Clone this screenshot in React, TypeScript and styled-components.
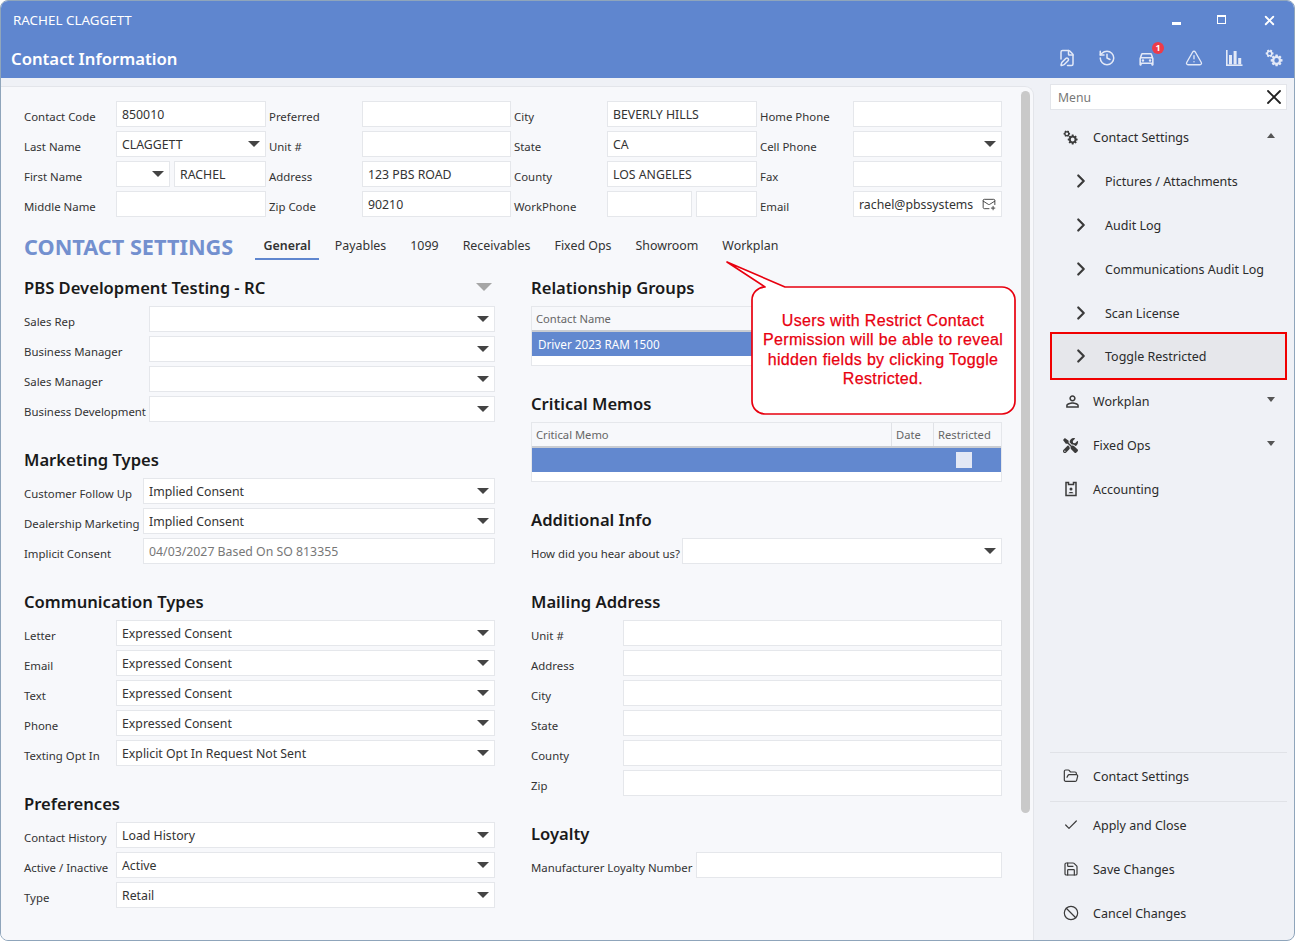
import styled, { createGlobalStyle } from 'styled-components';
import { Ban, Check, ChevronRight, FilePen, FolderOpen, History, MailPlus, Save, TriangleAlert, X } from 'lucide-react';
import { FaTools } from 'react-icons/fa';
import { MdOutlineDirectionsCar, MdPersonOutline } from 'react-icons/md';

const GlobalStyle = createGlobalStyle`
  * { box-sizing: border-box; }
  html, body { margin: 0; padding: 0; background: #fff; }
  body { font-family: "Noto Sans", "Open Sans", sans-serif; color: #333; }
`;

function gearPath(cx: number, cy: number, r: number, teeth: number) {
  const parts: string[] = [];
  const step = (Math.PI * 2) / teeth;
  for (let i = 0; i < teeth; i++) {
    const a = i * step;
    const pts = [
      [a - step * 0.42, r * 0.74],
      [a - step * 0.22, r],
      [a + step * 0.22, r],
      [a + step * 0.42, r * 0.74],
    ];
    pts.forEach(([ang, rad], j) => {
      const x = (cx + Math.cos(ang) * rad).toFixed(2);
      const y = (cy + Math.sin(ang) * rad).toFixed(2);
      parts.push(`${i === 0 && j === 0 ? 'M' : 'L'}${x} ${y}`);
    });
  }
  const hole = r * 0.38;
  parts.push(`Z M${cx + hole} ${cy} a${hole} ${hole} 0 1 0 ${-hole * 2} 0 a${hole} ${hole} 0 1 0 ${hole * 2} 0 Z`);
  return parts.join(' ');
}

function CogsIcon({ size = 18 }: { size?: number }) {
  return (
    <svg width={size} height={size} viewBox="0 0 18 18" fill="currentColor" fillRule="evenodd">
      <path d={gearPath(4.6, 4.4, 4, 6)} />
      <path d={gearPath(11.6, 11.4, 6, 8)} />
    </svg>
  );
}

function BarsIcon() {
  return (
    <svg width="18" height="18" viewBox="0 0 18 18" fill="currentColor">
      <rect x="1" y="1" width="1.6" height="16" />
      <rect x="1" y="15.4" width="16.5" height="1.6" />
      <rect x="4" y="6" width="3" height="9.4" />
      <rect x="8.6" y="2" width="3" height="13.4" />
      <rect x="13.2" y="9" width="3" height="6.4" />
    </svg>
  );
}

function AccountIcon() {
  return (
    <svg width="16" height="16" viewBox="0 0 16 16" fill="none" stroke="currentColor" strokeWidth="1.5">
      <path d="M3 1.5h2.5v2h5v-2H13v13H3z" />
      <circle cx="8" cy="8" r="1.5" fill="currentColor" stroke="none" />
      <path d="M5.5 12.2c.3-1.6 4.7-1.6 5 0z" fill="currentColor" stroke="none" />
    </svg>
  );
}

const Window = styled.div`
  width: 1295px;
  height: 941px;
  border: 1px solid #8fa5bb;
  border-radius: 8px;
  overflow: hidden;
  display: flex;
  flex-direction: column;
  background: #eff1f6;
`;

const TitleBar = styled.header`
  height: 77px;
  flex: none;
  background: #5f86cf;
  color: #fff;
  display: flex;
  flex-direction: column;
`;

const TitleRow = styled.div`
  height: 38px;
  padding: 0 17px 0 12px;
  display: flex;
  align-items: center;
  justify-content: space-between;
  font-size: 13.4px;
`;

const WindowButtons = styled.div`
  display: flex;
  align-items: center;
  gap: 36px;
`;

const MinButton = styled.span`
  width: 9px;
  height: 3px;
  margin-top: 7px;
  background: #fff;
`;

const MaxButton = styled.span`
  width: 9px;
  height: 9px;
  border: 1px solid #fff;
  border-top-width: 2px;
  margin-top: -2px;
`;

const HeaderRow = styled.div`
  height: 39px;
  padding: 0 11px 1px 10px;
  display: flex;
  align-items: center;
  justify-content: space-between;
`;

const PageTitle = styled.h1`
  margin: 0;
  font-size: 16.7px;
  font-weight: 600;
`;

const HeaderIcons = styled.div`
  display: flex;
  align-items: center;
  gap: 21px;
  color: #e3e9f7;
`;

const IconSlot = styled.span<{ $spaced?: boolean }>`
  position: relative;
  width: 19px;
  height: 19px;
  ${({ $spaced }) => ($spaced ? 'margin-left: 7px;' : '')}
  display: flex;
  align-items: center;
  justify-content: center;
`;

const Badge = styled.span`
  position: absolute;
  top: -7px;
  right: -8px;
  width: 12px;
  height: 12px;
  border-radius: 50%;
  background: #ee3b49;
  color: #fff;
  font-size: 9px;
  font-weight: 700;
  line-height: 12px;
  text-align: center;
`;

const Body = styled.div`
  flex: 1;
  min-height: 0;
  display: flex;
`;

const Panel = styled.main`
  position: relative;
  width: 1033px;
  margin-top: 8px;
  background: #f7f8fb;
  border-top: 1px solid #e3e5ea;
  border-right: 1px solid #e3e5ea;
  border-top-right-radius: 9px;
  display: flex;
`;

const Content = styled.div`
  width: 1020px;
  padding: 14px 19px 0 23px;
`;

const ScrollThumb = styled.div`
  width: 9px;
  height: 722px;
  margin-top: 4px;
  border-radius: 5px;
  background: #c9c9c9;
`;

const TopForm = styled.div`
  display: grid;
  grid-template-columns: 92px 150px 96px 149px 96px 150px 96px 149px;
  grid-auto-rows: 26px;
  row-gap: 4px;
`;

const Label = styled.label<{ $width?: number; $inset?: boolean }>`
  ${({ $width }) => ($width ? `width: ${$width}px; flex: none;` : '')}
  padding: 5px 0 0 ${({ $inset }) => ($inset ? 3 : 0)}px;
  font-size: 11.4px;
  line-height: 21px;
  white-space: nowrap;
  color: #333;
`;

const Field = styled.div<{ $muted?: boolean }>`
  flex: 1;
  min-width: 0;
  height: 26px;
  padding: 0 5px;
  display: flex;
  align-items: center;
  justify-content: space-between;
  gap: 4px;
  background: #fff;
  border: 1px solid #e5e7eb;
  font-size: 12.3px;
  white-space: nowrap;
  color: ${({ $muted }) => ($muted ? '#777' : '#333')};
`;

const Arrow = styled.span`
  flex: none;
  margin-left: auto;
  border-left: 6.5px solid transparent;
  border-right: 6.5px solid transparent;
  border-top: 6.5px solid #444;
`;

const SplitCell = styled.div<{ $columns: string }>`
  display: grid;
  grid-template-columns: ${({ $columns }) => $columns};
  gap: 4px;
`;

const TitleLine = styled.div`
  height: 26px;
  margin: 17px 0 16px;
  display: flex;
  align-items: flex-end;
`;

const SettingsTitle = styled.h2`
  width: 231px;
  margin: 0;
  font-size: 21.7px;
  font-weight: 700;
  line-height: 26px;
  color: #7390cf;
  white-space: nowrap;
`;

const Tabs = styled.nav`
  display: flex;
  gap: 7px;
`;

const Tab = styled.span<{ $active?: boolean }>`
  height: 26px;
  padding: 1px 8.5px 0;
  font-size: 12.4px;
  line-height: 22px;
  font-weight: ${({ $active }) => ($active ? 600 : 400)};
  color: #333;
  border-bottom: 2px solid ${({ $active }) => ($active ? '#5f86cf' : 'transparent')};
`;

const Columns = styled.div`
  display: grid;
  grid-template-columns: 471px 471px;
  column-gap: 36px;
`;

const Column = styled.div`
  display: flex;
  flex-direction: column;
  gap: 26px;
`;

const Section = styled.section`
  display: flex;
  flex-direction: column;
  gap: 4px;
`;

const Heading = styled.h3`
  height: 24px;
  margin: 0 0 2px;
  padding-bottom: 2px;
  display: flex;
  align-items: center;
  justify-content: space-between;
  font-size: 16.6px;
  font-weight: 600;
  color: #1a1a1a;
`;

const HeadingArrow = styled.span`
  margin-right: 3px;
  border-left: 8px solid transparent;
  border-right: 8px solid transparent;
  border-top: 8px solid #a6a6a6;
`;

const Row = styled.div`
  height: 26px;
  display: flex;
`;

const GridTable = styled.div<{ $height: number }>`
  height: ${({ $height }) => $height}px;
  background: #fff;
  border: 1px solid #e5e7eb;
`;

const GridHead = styled.div`
  height: 25px;
  padding-right: 1px;
  display: flex;
  background: #f7f8fb;
  border-bottom: 2px solid #c9ccd2;
`;

const HeadCell = styled.div<{ $width?: number }>`
  ${({ $width }) => ($width ? `width: ${$width}px; flex: none; border-left: 1px solid #e0e2e7;` : 'flex: 1;')}
  padding-left: 4px;
  font-size: 11.2px;
  line-height: 24px;
  color: #666;
`;

const GridRow = styled.div`
  height: 24px;
  padding: 0 6px 1px;
  display: flex;
  align-items: center;
  justify-content: flex-end;
  background: #6288cf;
  color: #fff;
  font-size: 11.7px;
`;

const RowText = styled.span`
  margin-right: auto;
`;

const CheckBox = styled.span`
  width: 16px;
  height: 16px;
  margin-right: 23px;
  background: #e3e8f5;
`;

const Callout = styled.aside`
  position: absolute;
  left: 725px;
  top: 173px;
  width: 294px;
  height: 158px;
`;

const CalloutShape = styled.svg`
  position: absolute;
  inset: 0;
`;

const CalloutText = styled.p`
  position: absolute;
  left: 25px;
  top: 51px;
  width: 264px;
  margin: 0;
  text-align: center;
  font-family: "Liberation Sans", Arial, sans-serif;
  font-size: 16px;
  line-height: 19.4px;
  letter-spacing: 0.35px;
  color: #e8000f;
  -webkit-text-stroke: 0.25px #e8000f;
`;

const Sidebar = styled.aside`
  flex: 1;
  min-width: 0;
  padding: 6px 7px 2px 16px;
  display: flex;
  flex-direction: column;
`;

const MenuSearch = styled.div`
  height: 26px;
  flex: none;
  padding: 0 0 0 7px;
  display: flex;
  align-items: center;
  justify-content: space-between;
  background: #fff;
  border: 1px solid #e3e5ea;
  font-size: 12.2px;
  color: #777;
  svg { color: #222; }
`;

const MenuList = styled.div`
  margin-top: 5px;
  display: flex;
  flex-direction: column;
`;

const MenuItem = styled.div<{ $sub?: boolean; $flagged?: boolean }>`
  height: 44px;
  flex: none;
  margin: ${({ $flagged }) => ($flagged ? '-1px 2px 1px' : '0')};
  padding-left: ${({ $sub, $flagged }) => ($sub ? ($flagged ? 20 : 22) : 13)}px;
  display: flex;
  align-items: center;
  font-size: 12.5px;
  color: #2b2b2b;
  ${({ $flagged }) => ($flagged ? 'background: #e6e7eb; outline: 2px solid #f00000;' : '')}
`;

const MenuIcon = styled.span<{ $sub?: boolean }>`
  width: ${({ $sub }) => ($sub ? 33 : 30)}px;
  flex: none;
  display: flex;
  align-items: center;
  color: #3b3b3b;
  ${({ $sub }) => ($sub ? 'svg { margin-left: -2px; }' : '')}
`;

const MenuCaret = styled.span<{ $up?: boolean }>`
  margin-left: auto;
  margin-right: 12px;
  margin-top: -4px;
  border-left: 4.5px solid transparent;
  border-right: 4.5px solid transparent;
  ${({ $up }) => ($up ? 'border-bottom' : 'border-top')}: 5px solid #555;
`;

const MenuFooter = styled.div`
  margin-top: auto;
  display: flex;
  flex-direction: column;
`;

const FooterGroup = styled.div`
  padding-top: 1px;
  border-top: 1px solid #e0e2e7;
  margin-bottom: 3px;
`;

const topForm: Array<[string, string | null]> = [
  ['Contact Code', '850010'], ['Preferred', ''], ['City', 'BEVERLY HILLS'], ['Home Phone', ''],
  ['Last Name', 'CLAGGETT'], ['Unit #', ''], ['State', 'CA'], ['Cell Phone', ''],
  ['First Name', null], ['Address', '123 PBS ROAD'], ['County', 'LOS ANGELES'], ['Fax', ''],
  ['Middle Name', ''], ['Zip Code', '90210'], ['WorkPhone', null], ['Email', 'rachel@pbssystems'],
];

const tabs = ['General', 'Payables', '1099', 'Receivables', 'Fixed Ops', 'Showroom', 'Workplan'];

function SelectRow({ label, value = '', width }: { label: string; value?: string; width: number }) {
  return (
    <Row>
      <Label $width={width}>{label}</Label>
      <Field>
        {value}
        <Arrow />
      </Field>
    </Row>
  );
}

function InputRow({ label, value = '', width, muted }: { label: string; value?: string; width: number; muted?: boolean }) {
  return (
    <Row>
      <Label $width={width}>{label}</Label>
      <Field $muted={muted}>{value}</Field>
    </Row>
  );
}

function TopFormCell({ label, value }: { label: string; value: string | null }) {
  if (label === 'First Name') {
    return (
      <SplitCell $columns="54px 92px">
        <Field><Arrow /></Field>
        <Field>RACHEL</Field>
      </SplitCell>
    );
  }
  if (label === 'WorkPhone') {
    return (
      <SplitCell $columns="85px 61px">
        <Field />
        <Field />
      </SplitCell>
    );
  }
  return (
    <Field>
      {value}
      {(label === 'Last Name' || label === 'Cell Phone') && <Arrow />}
      {label === 'Email' && <MailPlus size={14} strokeWidth={1.5} />}
    </Field>
  );
}

function FormPair({ label, value, inset }: { label: string; value: string | null; inset: boolean }) {
  return (
    <>
      <Label $inset={inset}>{label}</Label>
      <TopFormCell label={label} value={value} />
    </>
  );
}

export default function App() {
  return (
    <>
      <GlobalStyle />
      <Window>
        <TitleBar>
          <TitleRow>
            <span>RACHEL CLAGGETT</span>
            <WindowButtons>
              <MinButton />
              <MaxButton />
              <X size={15} strokeWidth={3} />
            </WindowButtons>
          </TitleRow>
          <HeaderRow>
            <PageTitle>Contact Information</PageTitle>
            <HeaderIcons>
              <IconSlot><FilePen size={18} strokeWidth={2} /></IconSlot>
              <IconSlot><History size={18} strokeWidth={2} /></IconSlot>
              <IconSlot>
                <MdOutlineDirectionsCar size={23} />
                <Badge>1</Badge>
              </IconSlot>
              <IconSlot $spaced><TriangleAlert size={18} strokeWidth={1.8} /></IconSlot>
              <IconSlot><BarsIcon /></IconSlot>
              <IconSlot><CogsIcon /></IconSlot>
            </HeaderIcons>
          </HeaderRow>
        </TitleBar>
        <Body>
          <Panel>
            <Content>
              <TopForm>
                {topForm.map(([label, value], i) => (
                  <FormPair key={label} label={label} value={value} inset={i % 4 !== 0} />
                ))}
              </TopForm>
              <TitleLine>
                <SettingsTitle>CONTACT SETTINGS</SettingsTitle>
                <Tabs>
                  {tabs.map((tab, i) => (
                    <Tab key={tab} $active={i === 0}>{tab}</Tab>
                  ))}
                </Tabs>
              </TitleLine>
              <Columns>
                <Column>
                  <Section>
                    <Heading>PBS Development Testing - RC<HeadingArrow /></Heading>
                    <SelectRow label="Sales Rep" width={125} />
                    <SelectRow label="Business Manager" width={125} />
                    <SelectRow label="Sales Manager" width={125} />
                    <SelectRow label="Business Development" width={125} />
                  </Section>
                  <Section>
                    <Heading>Marketing Types</Heading>
                    <SelectRow label="Customer Follow Up" value="Implied Consent" width={119} />
                    <SelectRow label="Dealership Marketing" value="Implied Consent" width={119} />
                    <InputRow label="Implicit Consent" value="04/03/2027 Based On SO 813355" width={119} muted />
                  </Section>
                  <Section>
                    <Heading>Communication Types</Heading>
                    <SelectRow label="Letter" value="Expressed Consent" width={92} />
                    <SelectRow label="Email" value="Expressed Consent" width={92} />
                    <SelectRow label="Text" value="Expressed Consent" width={92} />
                    <SelectRow label="Phone" value="Expressed Consent" width={92} />
                    <SelectRow label="Texting Opt In" value="Explicit Opt In Request Not Sent" width={92} />
                  </Section>
                  <Section>
                    <Heading>Preferences</Heading>
                    <SelectRow label="Contact History" value="Load History" width={92} />
                    <SelectRow label="Active / Inactive" value="Active" width={92} />
                    <SelectRow label="Type" value="Retail" width={92} />
                  </Section>
                </Column>
                <Column>
                  <Section>
                    <Heading>Relationship Groups</Heading>
                    <GridTable $height={60}>
                      <GridHead><HeadCell>Contact Name</HeadCell></GridHead>
                      <GridRow><RowText>Driver 2023 RAM 1500</RowText></GridRow>
                    </GridTable>
                  </Section>
                  <Section>
                    <Heading>Critical Memos</Heading>
                    <GridTable $height={60}>
                      <GridHead>
                        <HeadCell>Critical Memo</HeadCell>
                        <HeadCell $width={42}>Date</HeadCell>
                        <HeadCell $width={67}>Restricted</HeadCell>
                      </GridHead>
                      <GridRow><CheckBox /></GridRow>
                    </GridTable>
                  </Section>
                  <Section>
                    <Heading>Additional Info</Heading>
                    <SelectRow label="How did you hear about us?" width={151} />
                  </Section>
                  <Section>
                    <Heading>Mailing Address</Heading>
                    {['Unit #', 'Address', 'City', 'State', 'County', 'Zip'].map((label) => (
                      <InputRow key={label} label={label} width={92} />
                    ))}
                  </Section>
                  <Section>
                    <Heading>Loyalty</Heading>
                    <InputRow label="Manufacturer Loyalty Number" width={165} />
                  </Section>
                </Column>
              </Columns>
            </Content>
            <ScrollThumb />
            <Callout>
              <CalloutShape viewBox="0 0 294 158" width="294" height="158">
                <path
                  d="M1 2 L59 27 H276 A13 13 0 0 1 289 40 V141 A13 13 0 0 1 276 154 H39 A13 13 0 0 1 26 141 V40 A13 13 0 0 1 39 27 Z"
                  fill="#fff"
                  stroke="#e8000f"
                  strokeWidth="1.7"
                  strokeLinejoin="round"
                />
              </CalloutShape>
              <CalloutText>
                Users with Restrict Contact Permission will be able to reveal hidden fields by clicking Toggle Restricted.
              </CalloutText>
            </Callout>
          </Panel>
          <Sidebar>
            <MenuSearch>Menu<X size={24} strokeWidth={1.8} /></MenuSearch>
            <MenuList>
              <MenuItem><MenuIcon><CogsIcon size={15} /></MenuIcon>Contact Settings<MenuCaret $up /></MenuItem>
              {['Pictures / Attachments', 'Audit Log', 'Communications Audit Log', 'Scan License'].map((item) => (
                <MenuItem key={item} $sub>
                  <MenuIcon $sub><ChevronRight size={22} strokeWidth={2.4} /></MenuIcon>
                  {item}
                </MenuItem>
              ))}
              <MenuItem $sub $flagged>
                <MenuIcon $sub><ChevronRight size={22} strokeWidth={2.4} /></MenuIcon>
                Toggle Restricted
              </MenuItem>
              <MenuItem><MenuIcon><MdPersonOutline size={19} /></MenuIcon>Workplan<MenuCaret /></MenuItem>
              <MenuItem><MenuIcon><FaTools size={15} /></MenuIcon>Fixed Ops<MenuCaret /></MenuItem>
              <MenuItem><MenuIcon><AccountIcon /></MenuIcon>Accounting</MenuItem>
            </MenuList>
            <MenuFooter>
              <FooterGroup>
                <MenuItem><MenuIcon><FolderOpen size={16} strokeWidth={1.8} /></MenuIcon>Contact Settings</MenuItem>
              </FooterGroup>
              <FooterGroup>
                <MenuItem><MenuIcon><Check size={16} strokeWidth={1.8} /></MenuIcon>Apply and Close</MenuItem>
                <MenuItem><MenuIcon><Save size={16} strokeWidth={1.8} /></MenuIcon>Save Changes</MenuItem>
                <MenuItem><MenuIcon><Ban size={16} strokeWidth={1.8} /></MenuIcon>Cancel Changes</MenuItem>
              </FooterGroup>
            </MenuFooter>
          </Sidebar>
        </Body>
      </Window>
    </>
  );
}
